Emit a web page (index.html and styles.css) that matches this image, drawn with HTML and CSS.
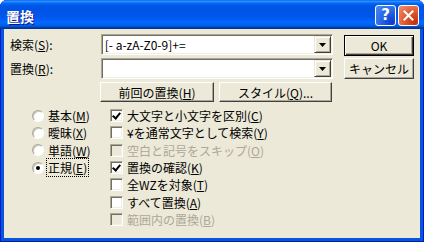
FILE: index.html
```html
<!DOCTYPE html>
<html lang="ja">
<head>
    <meta charset="UTF-8">
    <title>置換</title>
    <link rel="stylesheet" href="styles.css">
</head>
<body>
    <div class="window">
        <div class="titlebar">
            <span class="title">置換</span>
            <div class="ctrls">
                <span class="tbtn help">?</span>
                <span class="tbtn close">
                    <svg width="11" height="11" viewBox="0 0 11 11"><path d="M1.5 1.5 L9.5 9.5 M9.5 1.5 L1.5 9.5" stroke="#fff" stroke-width="2" stroke-linecap="square"/></svg>
                </span>
            </div>
        </div>

        <div class="client">
            <div class="main">
                <div class="field">
                    <label class="flabel">検索(<u>S</u>):</label>
                    <div class="combo">
                        <span class="combo-text">[- a-zA-Z0-9]+=</span>
                        <span class="drop"><svg width="7" height="4" viewBox="0 0 7 4"><path d="M0 0 H7 L3.5 4 Z" fill="#000"/></svg></span>
                    </div>
                </div>
                <div class="field">
                    <label class="flabel">置換(<u>R</u>):</label>
                    <div class="combo">
                        <span class="combo-text"></span>
                        <span class="drop"><svg width="7" height="4" viewBox="0 0 7 4"><path d="M0 0 H7 L3.5 4 Z" fill="#000"/></svg></span>
                    </div>
                </div>
                <div class="btnrow">
                    <button class="btn prev">前回の置換(<u>H</u>)</button>
                    <button class="btn style">スタイル(<u>Q</u>)...</button>
                </div>

                <div class="options">
                    <div class="radios">
                        <div class="opt"><span class="radio"></span><span>基本(<u>M</u>)</span></div>
                        <div class="opt"><span class="radio"></span><span>曖昧(<u>X</u>)</span></div>
                        <div class="opt"><span class="radio"></span><span>単語(<u>W</u>)</span></div>
                        <div class="opt"><span class="radio on"></span><span class="focus">正規(<u>E</u>)</span></div>
                    </div>
                    <div class="checks">
                        <div class="opt"><span class="check on"></span><span>大文字と小文字を区別(<u>C</u>)</span></div>
                        <div class="opt"><span class="check"></span><span>¥を通常文字として検索(<u>Y</u>)</span></div>
                        <div class="opt off"><span class="check"></span><span>空白と記号をスキップ(<u>O</u>)</span></div>
                        <div class="opt"><span class="check on"></span><span>置換の確認(<u>K</u>)</span></div>
                        <div class="opt"><span class="check"></span><span>全WZを対象(<u>T</u>)</span></div>
                        <div class="opt"><span class="check"></span><span>すべて置換(<u>A</u>)</span></div>
                        <div class="opt off"><span class="check"></span><span>範囲内の置換(<u>B</u>)</span></div>
                    </div>
                </div>
            </div>

            <div class="side">
                <button class="btn default">OK</button>
                <button class="btn">キャンセル</button>
            </div>
        </div>
    </div>
</body>
</html>
```

FILE: styles.css
```css
body {
    margin: 0;
    background: #fff;
    font-family: "Noto Sans CJK JP", "DejaVu Sans", sans-serif;
    font-size: 12px;
    color: #000;
}
.window {
    width: 424px;
    height: 242px;
    display: flex;
    flex-direction: column;
    background: #0855dd;
    border-radius: 7px 7px 0 0;
    overflow: hidden;
    box-shadow: inset 1px 0 #0019cf, inset -1px 0 #0019cf, inset 0 -1px #001ea0;
}
.titlebar {
    height: 29px;
    flex: none;
    display: flex;
    align-items: center;
    justify-content: space-between;
    padding: 0 5px 0 6px;
    background: linear-gradient(#0058ee 0%, #3593ff 4%, #288eff 6%, #127dff 8%, #036ffc 10%, #0262ee 14%, #0057e5 20%, #0054e3 24%, #0055eb 56%, #005bf5 66%, #026afe 76%, #0062ef 86%, #0052d6 92%, #0040ab 94%, #003092 100%);
}
.title {
    color: #fff;
    font-weight: bold;
    font-size: 14px;
    text-shadow: 1px 1px #0f1089;
    padding-top: 2px;
}
.ctrls {
    display: flex;
    gap: 2px;
    padding-top: 1px;
}
.tbtn {
    width: 21px;
    height: 21px;
    box-sizing: border-box;
    border: 1px solid #fff;
    border-radius: 3px;
    display: flex;
    align-items: center;
    justify-content: center;
    color: #fff;
    font-family: "DejaVu Sans", sans-serif;
    font-weight: bold;
    font-size: 15px;
}
.help {
    background: radial-gradient(circle at 85% 85%, #0b3ad0 0%, #2663e0 45%, #4d8cf8 100%);
}
.close {
    background: radial-gradient(circle at 85% 85%, #c43010 0%, #e0582e 45%, #f09070 100%);
}
.client {
    flex: 1;
    margin: 0 4px 4px 4px;
    background: #ece9d8;
    display: flex;
    padding: 5px 0 0 5px;
    gap: 11px;
}
.main {
    width: 324px;
    display: flex;
    flex-direction: column;
}
.field {
    display: flex;
    align-items: center;
    height: 21px;
    margin-bottom: 3px;
}
.flabel {
    width: 91px;
    padding-left: 1px;
}
.combo {
    width: 233px;
    height: 21px;
    box-sizing: border-box;
    background: #fff;
    border: 1px solid;
    border-color: #aca899 #fff #fff #aca899;
    box-shadow: inset 1px 1px #716f64, inset -1px -1px #f1efe2;
    display: flex;
    align-items: center;
    padding: 1px;
}
.combo-text {
    flex: 1;
    padding-left: 2px;
    font-size: 12px;
    white-space: nowrap;
}
.drop {
    width: 17px;
    height: 17px;
    box-sizing: border-box;
    background: #ece9d8;
    border: 1px solid;
    border-color: #ece9d8 #404040 #404040 #ece9d8;
    box-shadow: inset 1px 1px #fff, inset -1px -1px #aca899;
    display: flex;
    align-items: center;
    justify-content: center;
}
.btn {
    height: 21px;
    box-sizing: border-box;
    background: #ece9d8;
    border: 1px solid;
    border-color: #fff #404040 #404040 #fff;
    box-shadow: inset -1px -1px #aca899;
    font-family: inherit;
    font-size: 12px;
    color: #000;
    padding: 0;
    border-radius: 0;
}
.btnrow {
    display: flex;
    gap: 5px;
    margin-left: 91px;
}
.btnrow .btn {
    height: 20px;
}
.prev {
    width: 114px;
}
.style {
    width: 113px;
}
.side {
    width: 70px;
    display: flex;
    flex-direction: column;
    gap: 2px;
    padding-top: 1px;
}
.btn.default {
    border: 1px solid #000;
    box-shadow: inset 1px 1px #fff, inset -1px -1px #404040, inset -2px -2px #aca899;
}
.options {
    display: flex;
    margin-top: 5px;
}
.radios {
    width: 78px;
    padding-left: 23px;
}
.opt {
    height: 17.33px;
    display: flex;
    align-items: center;
    gap: 4px;
    white-space: nowrap;
}
.radio {
    width: 12px;
    height: 12px;
    box-sizing: border-box;
    border-radius: 50%;
    background: #fff;
    border: 1px solid;
    border-color: #aca899 #fff #fff #aca899;
    box-shadow: inset 1px 1px #c8c5b8;
    display: flex;
    align-items: center;
    justify-content: center;
}
.radio.on::after {
    content: "";
    width: 4px;
    height: 4px;
    border-radius: 50%;
    background: #000;
}
.focus {
    outline: 1px dotted #000;
    outline-offset: 0;
    padding: 0 1px;
    margin-left: -1px;
}
.check {
    width: 13px;
    height: 13px;
    box-sizing: border-box;
    background: #fff;
    border: 1px solid;
    border-color: #aca899 #fff #fff #aca899;
    box-shadow: inset 1px 1px #716f64, inset -1px -1px #f1efe2;
    position: relative;
}
.check.on::after {
    content: "";
    position: absolute;
    left: 3px;
    top: 1px;
    width: 3px;
    height: 6px;
    border: solid #000;
    border-width: 0 2px 2px 0;
    transform: rotate(40deg);
}
.opt.off {
    color: #aca899;
}
.opt.off .check {
    background: #ece9d8;
}
```
